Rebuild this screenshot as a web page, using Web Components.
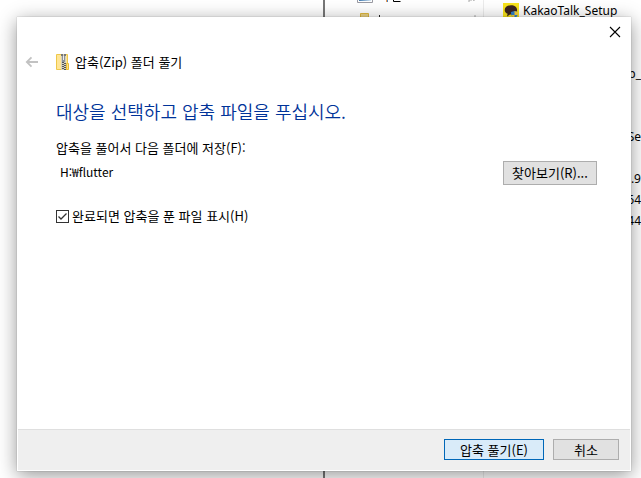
<!DOCTYPE html>
<html lang="ko">
<head>
<meta charset="utf-8">
<title>압축(Zip) 폴더 풀기</title>
<style>
html,body{margin:0;height:100%}
body{background:#fff;color:#000;font:13px/20px "Noto Sans CJK KR","Noto Sans",sans-serif;overflow:hidden}
</style>
</head>
<body>
<zip-desktop>
  <explorer-window slot="back">
    <file-row icon>KakaoTalk_Setup</file-row>
    <file-row></file-row>
    <file-row></file-row>
    <file-row end>p_</file-row>
    <file-row></file-row>
    <file-row></file-row>
    <file-row end>Se</file-row>
    <file-row></file-row>
    <file-row end>.9</file-row>
    <file-row end>64</file-row>
    <file-row end>_44</file-row>
  </explorer-window>
  <wizard-dialog>
    <span slot="title">압축(Zip) 폴더 풀기</span>
    <extract-form></extract-form>
    <push-button slot="actions" primary>압축 풀기(E)</push-button>
    <push-button slot="actions">취소</push-button>
  </wizard-dialog>
</zip-desktop>
<script>
class Base extends HTMLElement{
  constructor(){
    super();
    this.attachShadow({mode:'open'}).innerHTML='<style>*{box-sizing:border-box}:host{box-sizing:border-box}</style>'+this.view();
  }
}
customElements.define('zip-desktop',class extends Base{
  view(){return `<style>
    :host{display:grid;grid-template:minmax(0,1fr)/minmax(0,1fr);height:100%;overflow:hidden}
    .back{grid-area:1/1;display:grid;min-height:0}
    .front{grid-area:1/1;display:grid;padding:17px 10px 7px 17px;min-height:0;z-index:1}
  </style>
  <div class="back"><slot name="back"></slot></div>
  <div class="front"><slot></slot></div>`}
});
customElements.define('explorer-window',class extends Base{
  view(){return `<style>
    :host{display:grid;grid-template-columns:323px 160px minmax(0,1fr);min-height:0;overflow:hidden}
    .tree{border-left:2px solid #777;padding-left:30px;display:flex;align-items:flex-start}
    .tree svg{display:block}
    .files{border-left:1px solid #ececec;display:flex;flex-direction:column;overflow:hidden}
  </style>
  <div></div>
  <div class="tree"><svg width="126" height="18" viewBox="0 0 126 18" aria-hidden="true">
    <defs><linearGradient id="b"><stop stop-color="#3f78ae"/><stop offset="1" stop-color="#d5e6f3"/></linearGradient></defs>
    <path d="M2.500-8V2.500h15V-8" fill="#fff" stroke="#9a9aa2"/><path d="M4 0h12v1H4z" fill="url(#b)"/>
    <path d="M5.500 20v-6.500h8V20" fill="#e9d183" stroke="#ddb63b"/>
    <path d="M31 0h1v2h-1z" fill="#f19a50"/><path d="M32 0h1v2h-1z" fill="#4b82bb"/>
    <path d="M38.500 0v1.500h7" fill="none" stroke="#000"/><path d="M24 15h1v2h-1z" fill="#222"/>
    <path d="M113 1h2V0m1 0h1m1 0h1v1M119 16h2" fill="none" stroke="#aaa"/>
  </svg></div>
  <div class="files"><slot></slot></div>`}
});
customElements.define('file-row',class extends Base{
  view(){return `<style>
    :host{display:flex;flex:none;height:21px;align-items:center;gap:4px;padding-left:19px;font:12px/21px "Noto Sans","Noto Sans CJK KR",sans-serif;white-space:nowrap}
    :host([end]){justify-content:flex-end}
    svg{display:none;flex:none}
    :host([icon]) svg{display:block}
  </style>
  <svg width="16" height="16" viewBox="0 0 16 16" aria-hidden="true"><path d="M0 0h16v16H0z" fill="#f9e41c"/>
    <path d="M8 2.300c-3.700 0-6.300 2-6.300 4.600 0 1.700 1.100 3.100 2.900 3.900L4 13.500l3-2.100c4 .3 7.100-1.600 7.100-4.500C14.100 4.300 11.500 2.300 8 2.300z" fill="#3c2420"/>
    <path d="M8 9l3.500-1L15 9c0 3.200-1 5-3.500 6.500C9 14 8 12.200 8 9z" fill="#2a7fd0"/><path d="M11.500 8 15 9v3h-3.500zM8.500 12h3v3.500c-1.500-1-2.500-2-3-3.500z" fill="#f8cf39"/></svg>
  <span><slot></slot></span>`}
});
customElements.define('push-button',class extends Base{
  view(){return `<style>
    :host{display:block;width:66px}
    :host([primary]){width:100px}
    :host([wide]){width:94px}
    button{display:block;width:100%;height:21px;margin:0;padding:0;border:1px solid #adadad;background:#e1e1e1;color:inherit;font:inherit;line-height:18px;text-align:center;white-space:nowrap;border-radius:0}
    :host([wide]) button{height:24px;line-height:20px}
    :host([primary]) button{border-color:#0067b8;background:#d9ebf9}
  </style><button type="button"><slot></slot></button>`}
});
customElements.define('extract-form',class extends Base{
  view(){return `<style>
    :host{display:block;padding:21px 34px 0 39px}
    h1{margin:0 0 14px;font-size:18px;line-height:26px;font-weight:350;color:#003399}
    .lab{display:block;line-height:20px;margin-bottom:3px}
    .path{display:flex;align-items:center;justify-content:space-between;gap:16px}
    input[type=text]{flex:1;min-width:0;border:0;padding:0 0 2px 4px;background:none;color:inherit;font:12px/20px "Noto Sans CJK KR","Noto Sans",sans-serif;outline:0}
    .check{display:flex;align-items:center;gap:3px;margin-top:21px;line-height:20px}
    .box{display:grid;width:13px;height:13px}
    .box>*{grid-area:1/1}
    input[type=checkbox]{appearance:none;margin:0;width:13px;height:13px;border:1px solid #333;background:#fff}
    svg{pointer-events:none;z-index:1}
    input:not(:checked)+svg{visibility:hidden}
  </style>
  <h1>대상을 선택하고 압축 파일을 푸십시오.</h1>
  <label class="lab" for="dest">압축을 풀어서 다음 폴더에 저장(F):</label>
  <div class="path"><input id="dest" type="text" value="H:₩flutter" spellcheck="false"><push-button wide>찾아보기(R)...</push-button></div>
  <label class="check"><span class="box"><input type="checkbox" checked><svg width="13" height="13" viewBox="0 0 13 13"><path d="M2.500 6.500 5 9l5.500-5.500" fill="none" stroke="#333" stroke-width="1.300"/></svg></span><span>완료되면 압축을 푼 파일 표시(H)</span></label>`}
});
customElements.define('wizard-dialog',class extends Base{
  view(){return `<style>
    :host{display:flex;flex-direction:column;background:#fff;box-shadow:0 0 1px rgba(0,0,0,.35),0 4px 18px rgba(0,0,0,.42);min-height:0}
    .top{display:flex;justify-content:flex-end;height:30px}
    button{border:0;padding:0;margin:0;background:none;display:grid;place-items:center;color:inherit}
    .close{width:32px;height:30px}
    header{display:flex;align-items:center;height:30px;padding-left:8px}
    .back{width:14px;height:20px;margin-right:17px}
    .zip{margin-right:5px}
    svg{display:block}
    main{flex:1;min-height:0}
    footer{display:flex;justify-content:flex-end;align-items:center;gap:9px;height:41px;margin:0 1px 1px;padding:0 11px 1px;border-top:1px solid #dfdfdf;background:#efefef}
  </style>
  <div class="top"><button class="close" type="button" aria-label="닫기"><svg width="12" height="12" viewBox="0 0 12 12"><path d="M1 1l10 10M11 1 1 11" stroke="#000" stroke-width="1.100"/></svg></button></div>
  <header><button class="back" type="button" aria-label="뒤로" disabled><svg width="14" height="12" viewBox="0 0 14 12"><path d="M13 6H2M6.500 1.300 1.800 6l4.700 4.700" fill="none" stroke="#c2c2c2" stroke-width="1.800"/></svg></button>
    <svg class="zip" width="14" height="16" viewBox="0 0 14 16" aria-hidden="true">
      <path d="M.5.5h11v15H.5z" fill="#ffe596" stroke="#eec84a"/><path d="M10.500 9.500h2v6h-2z" fill="#ffe07d" stroke="#e9bd37"/>
      <path d="M5 0h5v16H5z" fill="#d6d1bd"/><path d="M5 0h2v2H5zM8 0h2v2H8z" fill="#777"/>
      <path d="M6 2h3v6H6z" fill="#8c9198"/><path d="M7 2h1v4H7z" fill="#eee"/>
      <path d="M6 8h2v1H6zM8 9h2v1H8zM6 10h2v1H6zM8 11h2v1H8zM6 12h2v1H6zM8 13h2v1H8zM6 14h2v1H6zM8 15h2v1H8z" fill="#555"/>
    </svg><slot name="title"></slot></header>
  <main><slot></slot></main>
  <footer><slot name="actions"></slot></footer>`}
});
</script>
</body>
</html>
